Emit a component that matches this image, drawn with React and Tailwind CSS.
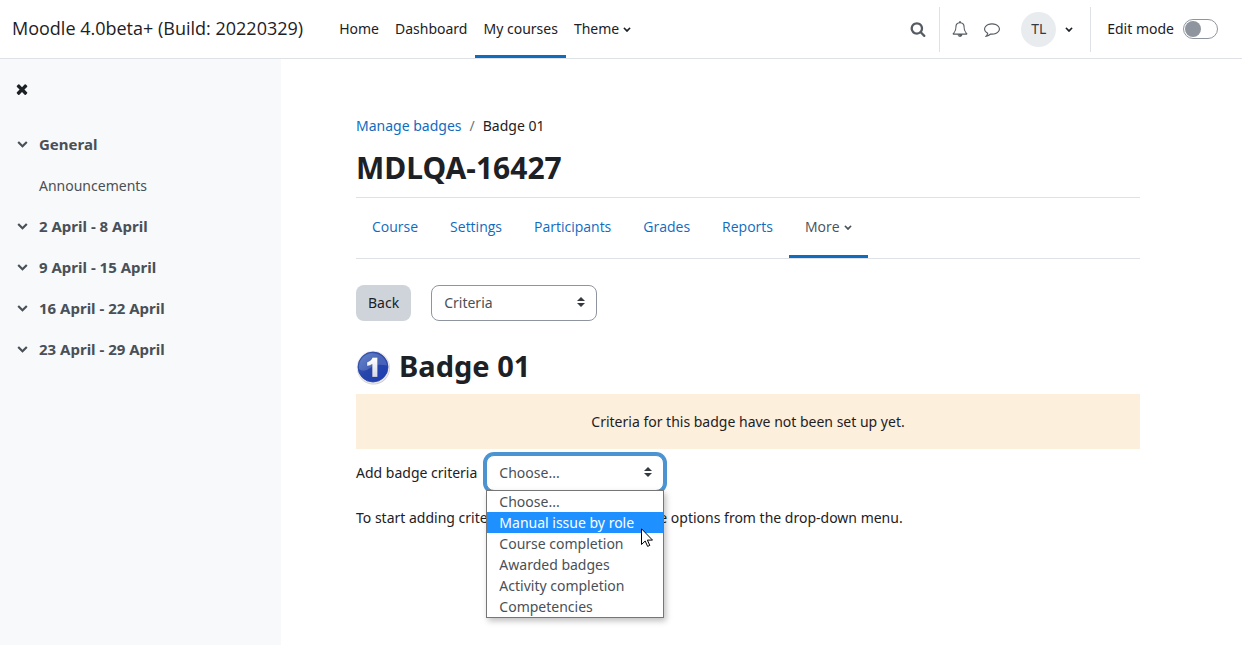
import React from "react";

const ICONS = {
  chevron:
    "M1683 808l-742 741q-19 19-45 19t-45-19l-742-741q-19-19-19-45.5t19-45.5l166-165q19-19 45-19t45 19l531 531 531-531q19-19 45-19t45 19l166 165q19 19 19 45.5t-19 45.5z",
  times:
    "M1490 1322q0 40-28 68l-136 136q-28 28-68 28t-68-28l-294-294-294 294q-28 28-68 28t-68-28l-136-136q-28-28-28-68t28-68l294-294-294-294q-28-28-28-68t28-68l136-136q28-28 68-28t68 28l294 294 294-294q28-28 68-28t68 28l136 136q28 28 28 68t-28 68l-294 294 294 294q28 28 28 68z",
  search:
    "M1216 832q0-185-131.5-316.5t-316.5-131.5-316.5 131.5-131.5 316.5 131.5 316.5 316.5 131.5 316.5-131.5 131.5-316.500zm512 832q0 52-38 90t-90 38q-54 0-90-38l-343-342q-179 124-399 124-143 0-273.500-55.500t-225-150-150-225-55.500-273.500 55.500-273.500 150-225 225-150 273.500-55.500 273.500 55.500 225 150 150 225 55.500 273.500q0 220-124 399l343 343q37 37 37 90z",
  bell:
    "M912 1696q0-16-16-16-59 0-101.500-42.500t-42.500-101.500q0-16-16-16t-16 16q0 73 51.500 124.500t124.500 51.500q16 0 16-16zm-666-288h1300q-266-300-266-832 0-51-24-105t-69-103-121.500-80.500-169.500-31.500-169.500 31.500-121.500 80.500-69 103-24 105q0 532-266 832zm1482 0q0 52-38 90t-90 38h-448q0 106-75 181t-181 75-181-75-75-181h-448q-52 0-90-38t-38-90q50-42 91-88t85-119.500 74.500-158.500 50-206 19.500-260q0-152 117-282.500t307-158.500q-8-19-8-39 0-40 28-68t68-28 68 28 28 68q0 20-8 39 190 28 307 158.500t117 282.500q0 139 19.500 260t50 206 74.500 158.500 85 119.500 91 88z",
  comment:
    "M896 384q-204 0-381.500 69.500t-282 187.500-104.500 255q0 112 71.500 213.500t201.500 175.500l87 50-27 96q-24 91-70 172 152-63 275-171l43-38 57 6q69 8 130 8 204 0 381.500-69.500t282-187.500 104.500-255-104.500-255-282-187.500-381.500-69.500zm896 512q0 174-120 321.500t-326 233-450 85.500q-70 0-145-8-198 175-460 242-49 14-114 22h-5q-15 0-27-10.500t-16-27.500v-1q-3-4-.5-12t2-10 4.500-9.500l6-9 7-8.500 8-9q7-8 31-34.500t34.500-38 31-39.500 32.500-51 27-59 26-76q-157-89-247.500-220t-90.500-281q0-174 120-321.500t326-233 450-85.500 450 85.500 326 233 120 321.500z",
};

function Icon({ name, className }) {
  return (
    <svg viewBox="0 0 1792 1792" fill="currentColor" aria-hidden="true" className={className}>
      <path d={ICONS[name]} />
    </svg>
  );
}

function SelectBox({ id, label, options, className }) {
  return (
    <div className="relative">
      <select
        id={id}
        aria-label={label}
        className={
          "block h-9 appearance-none rounded-lg border bg-white px-3 text-sm text-[#495057] outline-none " + className
        }
      >
        {options.map((o) => (
          <option key={o}>{o}</option>
        ))}
      </select>
      <svg
        viewBox="0 0 4 5"
        fill="#343a40"
        aria-hidden="true"
        className="pointer-events-none absolute right-3 top-3 h-[10px] w-2"
      >
        <path d="M2 0L0 2h4zm0 5L0 3h4z" />
      </svg>
    </div>
  );
}

function BadgeImage() {
  return (
    <svg viewBox="0 0 35 35" className="mt-1 h-[35px] w-[35px] shrink-0" role="img" aria-label="Badge 01">
      <defs>
        <linearGradient id="badge-fill" x1="0" y1="0" x2="0.9" y2="1">
          <stop offset="0" stopColor="#4a72c4" />
          <stop offset="0.5" stopColor="#2747aa" />
          <stop offset="1" stopColor="#1b3cb4" />
        </linearGradient>
        <linearGradient id="badge-digit" x1="0" y1="0" x2="0" y2="1">
          <stop offset="0" stopColor="#ffffff" />
          <stop offset="1" stopColor="#d5d9e4" />
        </linearGradient>
      </defs>
      <circle cx="17.5" cy="18" r="16.5" fill="#c9c9cd" />
      <circle cx="17.2" cy="17.3" r="16.5" fill="#e9e7e8" />
      <circle cx="17" cy="17" r="15" fill="url(#badge-fill)" stroke="#2440a0" strokeWidth="0.8" />
      <path d="M3 19a14 14 0 0 1 28-3.5Q20 13 14 18T3 19z" fill="#ffffff" opacity="0.16" />
      <path
        d="M16.5 7.5h5v19.500h-5.300V14.200q-2.200 1.600-5.200 1.900v-3.900q4-1 5.500-4.700z"
        fill="url(#badge-digit)"
        stroke="#1f2f78"
        strokeOpacity="0.35"
        strokeWidth="0.6"
      />
    </svg>
  );
}

const topNav = ["Home", "Dashboard", "My courses"];
const sections = ["2 April - 8 April", "9 April - 15 April", "16 April - 22 April", "23 April - 29 April"];
const tabs = ["Course", "Settings", "Participants", "Grades", "Reports"];
const criteria = [
  "Choose...",
  "Manual issue by role",
  "Course completion",
  "Awarded badges",
  "Activity completion",
  "Competencies",
];

function Header() {
  return (
    <header className="flex h-[59px] items-stretch border-b border-[#dee2e6] bg-white">
      <a
        href="#"
        className="flex items-center pb-0.5 pl-3 font-['Open_Sans','Noto_Sans',sans-serif] text-lg whitespace-nowrap"
      >
        Moodle 4.0beta+ (Build: 20220329)
      </a>
      <nav className="ml-7 flex whitespace-nowrap">
        {topNav.map((t) => (
          <a
            key={t}
            href="#"
            className={
              "flex items-center border-b-[3px] border-t-[3px] border-t-transparent px-2 " +
              (t === "My courses" ? "border-b-[#0f6cbf]" : "border-b-transparent")
            }
          >
            {t}
          </a>
        ))}
        <button type="button" className="flex items-center gap-1 px-2">
          Theme
          <Icon name="chevron" className="h-2 w-2" />
        </button>
      </nav>
      <div className="ml-auto flex items-center pr-6">
        <button type="button" aria-label="Search" className="mr-[13px] text-[#555c63]">
          <Icon name="search" className="h-4 w-4" />
        </button>
        <div className="flex h-[45px] items-center border-x border-[#dee2e6] pl-3 pr-[17px]">
          <button type="button" aria-label="Notifications" className="mr-4 text-[#555c63]">
            <Icon name="bell" className="h-4 w-4" />
          </button>
          <button type="button" aria-label="Messages" className="mr-[21px] text-[#555c63]">
            <Icon name="comment" className="h-4 w-4" />
          </button>
          <button type="button" className="flex items-center gap-[9px]">
            <span className="flex h-[35px] w-[35px] items-center justify-center rounded-full bg-[#e9ecef] text-[#343a40]">
              TL
            </span>
            <Icon name="chevron" className="h-2 w-2" />
          </button>
        </div>
        <label htmlFor="edit-mode" className="ml-4 mr-[9px] whitespace-nowrap">
          Edit mode
        </label>
        <input
          id="edit-mode"
          type="checkbox"
          role="switch"
          className="h-5 w-[35px] appearance-none rounded-full border border-[#8f959e] bg-white before:m-px before:block before:h-4 before:w-4 before:rounded-full before:bg-[#8f959e] checked:before:ml-4"
        />
      </div>
    </header>
  );
}

function Section({ title }) {
  return (
    <button type="button" className="flex h-[41px] w-full items-center gap-[11px] text-[15px] font-bold">
      <Icon name="chevron" className="mb-0.5 h-[11px] w-[11px]" />
      {title}
    </button>
  );
}

function Sidebar() {
  return (
    <aside className="w-[281px] shrink-0 bg-[#f8f9fa] px-[17px] pt-[22px] text-[#495057]">
      <button type="button" aria-label="Close course index" className="block text-[#1d2125]">
        <Icon name="times" className="-ml-[3px] h-4 w-4" />
      </button>
      <nav className="mt-[27px]">
        <Section title="General" />
        <a href="#" className="flex h-[41px] items-center pl-[22px]">
          Announcements
        </a>
        {sections.map((s) => (
          <Section key={s} title={s} />
        ))}
      </nav>
    </aside>
  );
}

export default function App() {
  return (
    <div className="flex min-h-screen flex-col bg-white font-['Noto_Sans','Open_Sans',sans-serif] text-sm text-[#1d2125]">
      <Header />
      <div className="flex flex-1">
        <Sidebar />
        <main className="min-w-0 flex-1 pl-[75px] pr-[102px] pt-14">
          <nav aria-label="Breadcrumb" className="flex gap-2 leading-[22px]">
            <a href="#" className="text-[#0f6cbf]">
              Manage badges
            </a>
            <span className="text-[#6a737b]">/</span>
            <span>Badge 01</span>
          </nav>
          <h1 className="mt-[13px] text-[30px] leading-9 font-bold">MDLQA-16427</h1>
          <nav className="mt-[11px] flex h-[62px] border-y border-[#dee2e6] font-['Open_Sans','Noto_Sans',sans-serif] text-[#0f6cbf]">
            {tabs.map((t) => (
              <a key={t} href="#" className="flex items-center border-b-[3px] border-transparent px-4">
                {t}
              </a>
            ))}
            <button
              type="button"
              className="flex items-center gap-1 border-b-[3px] border-b-[#0f6cbf] px-4 text-[#495057]"
            >
              More
              <Icon name="chevron" className="h-2 w-2" />
            </button>
          </nav>
          <div className="mt-[26px] flex gap-5">
            <button type="button" className="h-9 rounded-lg bg-[#ced4da] px-3">
              Back
            </button>
            <SelectBox
              id="badge-page"
              label="Badge section"
              options={["Criteria"]}
              className="w-[166px] border-[#8f959e]"
            />
          </div>
          <div className="mt-[25px] flex items-center gap-2">
            <BadgeImage />
            <h2 className="text-[29px] leading-9 font-bold">Badge 01</h2>
          </div>
          <div className="mt-[9px] bg-[#fcefdc] px-5 py-4 text-center leading-[23px]">
            Criteria for this badge have not been set up yet.
          </div>
          <div className="mt-[6px] flex items-center gap-[9px]">
            <label htmlFor="criteria-type">Add badge criteria</label>
            <div className="relative">
              <SelectBox
                id="criteria-type"
                options={criteria}
                className="w-[178px] border-[#4b93d1] ring-[3px] ring-[#4b93d1]"
              />
              <ul
                role="listbox"
                aria-label="Badge criteria"
                className="absolute left-0 top-[35px] z-10 w-[178px] border border-[#767676] bg-white text-[#495057] shadow-[2px_3px_6px_rgba(0,0,0,0.25)]"
              >
                {criteria.map((c, i) => (
                  <li
                    key={c}
                    role="option"
                    aria-selected={i === 1}
                    className={"h-[21px] px-3 leading-[21px] " + (i === 1 ? "bg-[#1e90ff] text-white" : "")}
                  >
                    {c}
                  </li>
                ))}
              </ul>
              <svg
                viewBox="0 0 12 19"
                aria-hidden="true"
                className="absolute left-[155px] top-[73px] z-20 h-[19px] w-3"
              >
                <path
                  d="M.5 .8v15.700l3.700-3.500 2.400 5.400 2.200-1-2.400-5.300h5.100z"
                  fill="#fff"
                  stroke="#000"
                  strokeWidth="1"
                />
              </svg>
            </div>
          </div>
          <p className="mt-[15px] leading-[23px]">
            To start adding criteria, please select one of the options from the drop-down menu.
          </p>
        </main>
      </div>
    </div>
  );
}
